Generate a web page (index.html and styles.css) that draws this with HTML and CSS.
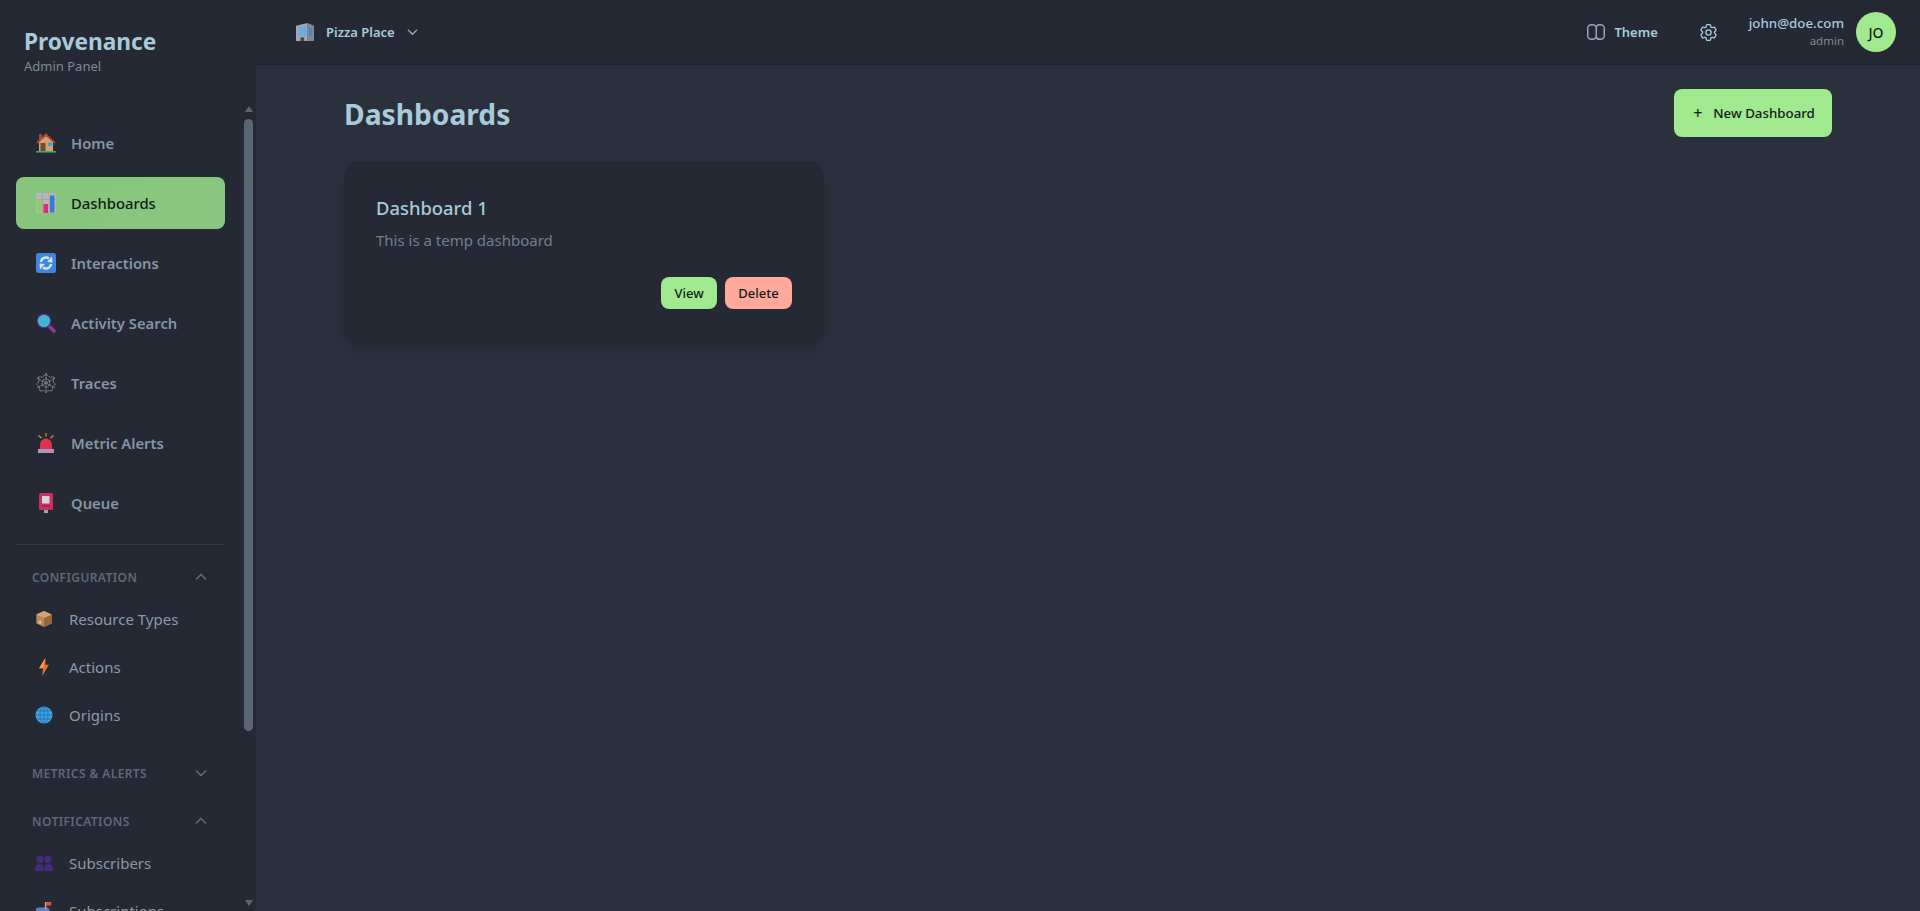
FILE: index.html
```html
<!DOCTYPE html>
<html lang="en">
<head>
<meta charset="utf-8">
<title>Provenance Admin Panel</title>
<link rel="stylesheet" href="styles.css">
</head>
<body>
<div class="app">
  <aside class="sidebar">
    <div class="brand">
      <div class="brand-name">Provenance</div>
      <div class="brand-sub">Admin Panel</div>
    </div>
    <div class="side-body">
      <nav class="nav">
        <a class="nav-item"><svg class="ico" viewBox="0 0 20 20"><rect x="3" y="1" width="3" height="7" fill="#7a5a46"/><path d="M3 9 10 3l7 6v9H3z" fill="#d9a06e"/><path d="M1 10 10 1.500 19 10" fill="none" stroke="#c9472f" stroke-width="1.700"/><rect x="4.500" y="10" width="5" height="8" fill="#6d4a3c"/><rect x="12" y="9.500" width="4" height="3.500" fill="#3fa0e0"/><rect x="0" y="18" width="20" height="1.600" fill="#3fae6a"/></svg><span>Home</span></a>
        <a class="nav-item active"><svg class="ico" viewBox="0 0 20 20"><rect width="20" height="20" rx="2" fill="#b9b5c0"/><path d="M0 6.500h20M0 13h20M6.500 0v20M13 0v20" stroke="#9d9aa6" stroke-width=".7"/><rect x="1.500" y="6" width="4" height="13" fill="#8ccf5e"/><rect x="7.500" y="11" width="4.500" height="9" fill="#d9306f"/><rect x="14" y="2.500" width="4.500" height="17" fill="#2f7fd0"/></svg><span>Dashboards</span></a>
        <a class="nav-item"><svg class="ico" viewBox="0 0 20 20"><rect width="20" height="20" rx="2.500" fill="#3f86dd"/><path d="M5 9a5 5 0 0 1 8-3.500M15 11a5 5 0 0 1-8 3.500" fill="none" stroke="#d5e4f5" stroke-width="2.400"/><path d="m11 9 5.500.5L16 3.500zM9 11l-5.500-.5.500 6z" fill="#d5e4f5"/></svg><span>Interactions</span></a>
        <a class="nav-item"><svg class="ico" viewBox="0 0 20 20"><path d="m12.500 12.500 5.500 5.500" stroke="#8a3f8f" stroke-width="3.600" stroke-linecap="round"/><circle cx="8" cy="8" r="7.600" fill="#4a2f7a"/><circle cx="8" cy="8" r="6.200" fill="#45b4d0"/></svg><span>Activity Search</span></a>
        <a class="nav-item"><svg class="ico" viewBox="0 0 20 20" fill="none" stroke="#a9a5ad" stroke-width=".8" stroke-dasharray="1.400 .5"><path d="M10 0v20M1 5l18 10M19 5 1 15"/><path d="M10 1 13.500 4 18 4 17 9 19.500 11 16.500 14.500 16 18 11.500 17.500 10 19.500 8 17.500 4 18 3.500 14.500.5 11 3 9 2 4 6.500 4z"/><path d="M10 5.500 13.500 7.500 14 12 10 14.500 6 12 6.500 7.500z"/></svg><span>Traces</span></a>
        <a class="nav-item"><svg class="ico" viewBox="0 0 20 20"><path d="M10 0v3.500M2.500 2.500l3 2.500M17.500 2.500l-3 2.500" stroke="#d8a72c" stroke-width="1.100"/><path d="M4 16v-3.500a6 7 0 0 1 12 0V16z" fill="#de3348"/><rect x="2" y="16" width="16" height="4" fill="#b592c0"/></svg><span>Metric Alerts</span></a>
        <a class="nav-item"><svg class="ico" viewBox="0 0 20 20"><rect x="8" y="16" width="4" height="4" fill="#a99bb0"/><rect x="3" y="0" width="14" height="17" rx="1.500" fill="#c92f61"/><rect x="6" y="3" width="7.500" height="7.500" fill="#d8d3dc"/><path d="M6 13h8" stroke="#7e1c40" stroke-width="1"/></svg><span>Queue</span></a>
      </nav>
      <hr class="divider">
      <div class="group">
        <div class="group-title"><span>CONFIGURATION</span><svg class="chev" viewBox="0 0 12 8"><path d="M1 6.500 6 1.500l5 5"/></svg></div>
        <a class="sub-item"><svg class="ico" viewBox="0 0 20 20"><path d="M10 1 18.500 5v10L10 19 1.500 15V5z" fill="#b9875a"/><path d="M10 9 18.500 5v10L10 19z" fill="#96683f"/><path d="M10 1 18.500 5 10 9 1.500 5z" fill="#d0a478"/><rect x="4" y="12" width="3" height="3" fill="#d8c9c0"/></svg><span>Resource Types</span></a>
        <a class="sub-item"><svg class="ico" viewBox="0 0 20 20"><path d="M11.500 0 4.500 11.500h4.500L8 20l7.500-12.500h-4z" fill="#e8703a"/><path d="M11.500 0 4.500 11.500h4.500z" fill="#f0a23c"/></svg><span>Actions</span></a>
        <a class="sub-item"><svg class="ico" viewBox="0 0 20 20"><circle cx="10" cy="10" r="9.500" fill="#3fa5e0"/><g fill="none" stroke="#1f6aa8" stroke-width=".9"><ellipse cx="10" cy="10" rx="4.500" ry="9.500"/><path d="M10 .5v19M.5 10h19M2 5.500h16M2 14.500h16"/></g></svg><span>Origins</span></a>
      </div>
      <div class="group group-collapsed">
        <div class="group-title"><span>METRICS &amp; ALERTS</span><svg class="chev" viewBox="0 0 12 8"><path d="M1 1.500 6 6.500l5-5"/></svg></div>
      </div>
      <div class="group">
        <div class="group-title"><span>NOTIFICATIONS</span><svg class="chev" viewBox="0 0 12 8"><path d="M1 6.500 6 1.500l5 5"/></svg></div>
        <a class="sub-item"><svg class="ico" viewBox="0 0 20 20"><g fill="#47297f"><circle cx="5.500" cy="6" r="4"/><circle cx="14.500" cy="6" r="4"/><path d="M0 19v-3.500a5 5 0 0 1 9.500-1V19zM10.500 19v-4.500a5 5 0 0 1 9.500 1V19z"/></g></svg><span>Subscribers</span></a>
        <a class="sub-item"><svg class="ico" viewBox="0 0 20 20"><rect x="1" y="6" width="15" height="10" rx="3" fill="#5f7fc0"/><rect x="11" y="0" width="1.500" height="8" fill="#b9b5c0"/><rect x="12" y="0" width="6" height="4" fill="#e0503a"/></svg><span>Subscriptions</span></a>
      </div>
      <div class="scrollbar">
        <span class="arrow arrow-up"></span>
        <span class="thumb"></span>
        <span class="arrow arrow-down"></span>
      </div>
    </div>
  </aside>
  <div class="main-col">
    <header class="topbar">
      <div class="org">
        <svg class="ico" viewBox="0 0 20 20"><path d="M0 3 13 0v20H0z" fill="#a9a3b4"/><path d="M13 0l7 3v17h-7z" fill="#8a8496"/><path d="M3 4h8v10.500H3z" fill="#49b5ee"/><path d="M3 7.500h8M3 11h8M5.700 4v10.500M8.300 4v10.500" stroke="#a9a3b4" stroke-width=".7"/><rect x="14.500" y="5" width="3" height="9.500" fill="#2f8fd0"/><rect x="5" y="16" width="4" height="4" fill="#4a4452"/></svg>
        <span class="org-name">Pizza Place</span>
        <svg class="chev chev-org" viewBox="0 0 12 8"><path d="M1 1.500 6 6.500l5-5"/></svg>
      </div>
      <div class="top-right">
        <div class="theme">
          <svg class="theme-ico" viewBox="0 0 18 16"><rect x=".75" y=".75" width="8.500" height="14.500" rx="3.500"/><path d="M9.250 3.500c.3-1.700 1.300-2.750 3-2.750h1.500a3.500 3.500 0 0 1 3.500 3.500v7.500a3.500 3.500 0 0 1-3.500 3.500h-1.500c-1.700 0-2.700-1-3-2.750"/></svg>
          <span>Theme</span>
        </div>
        <svg class="gear" viewBox="0 0 24 24"><path d="M9.594 3.940c.09-.542.56-.94 1.110-.94h2.593c.55 0 1.020.398 1.110.94l.213 1.281c.063.374.313.686.645.870.074.040.147.083.220.127.325.196.720.257 1.075.124l1.217-.456a1.125 1.125 0 0 1 1.370.490l1.296 2.247a1.125 1.125 0 0 1-.260 1.431l-1.003.827c-.293.241-.438.613-.430.992a7.723 7.723 0 0 1 0 .255c-.008.378.137.750.430.991l1.004.827c.424.350.534.955.260 1.430l-1.298 2.247a1.125 1.125 0 0 1-1.369.491l-1.217-.456c-.355-.133-.750-.072-1.076.124a6.470 6.470 0 0 1-.220.128c-.331.183-.581.495-.644.869l-.213 1.281c-.090.543-.560.940-1.110.940h-2.594c-.550 0-1.019-.398-1.110-.940l-.213-1.281c-.062-.374-.312-.686-.644-.870a6.520 6.520 0 0 1-.220-.127c-.325-.196-.720-.257-1.076-.124l-1.217.456a1.125 1.125 0 0 1-1.369-.490l-1.297-2.247a1.125 1.125 0 0 1 .260-1.431l1.004-.827c.292-.240.437-.613.430-.991a6.932 6.932 0 0 1 0-.255c.007-.380-.138-.751-.430-.992l-1.004-.827a1.125 1.125 0 0 1-.260-1.430l1.297-2.247a1.125 1.125 0 0 1 1.370-.491l1.216.456c.356.133.751.072 1.076-.124.072-.044.146-.086.220-.128.332-.183.582-.495.644-.869l.214-1.280Z"/><path d="M15 12a3 3 0 1 1-6 0 3 3 0 0 1 6 0Z"/></svg>
        <div class="user">
          <div class="user-mail">john@doe.com</div>
          <div class="user-role">admin</div>
        </div>
        <div class="avatar">JO</div>
      </div>
    </header>
    <main class="content">
      <div class="page-head">
        <h1>Dashboards</h1>
        <button class="btn-new"><span class="plus">+</span>New Dashboard</button>
      </div>
      <section class="card">
        <h2>Dashboard 1</h2>
        <p>This is a temp dashboard</p>
        <div class="card-actions">
          <button class="btn btn-view">View</button>
          <button class="btn btn-del">Delete</button>
        </div>
      </section>
    </main>
  </div>
</div>
</body>
</html>
```
FILE: styles.css
```css
* { box-sizing: border-box; }
html, body { margin: 0; height: 100%; overflow: hidden; }
body {
  font-family: "Noto Sans", "Open Sans", sans-serif;
  background: #2a303c;
  color: #a8cadb;
}
.app { display: flex; height: 911px; }
.sidebar {
  width: 256px;
  flex: none;
  background: #242933;
  display: flex;
  flex-direction: column;
  overflow: hidden;
}
.brand {
  height: 100px;
  flex: none;
  padding: 27px 24px 0;
  border-bottom: 1px solid #21252e;
}
.brand-name { font-size: 22.7px; font-weight: 700; line-height: 30px; color: #a8cadb; }
.brand-sub { font-size: 13px; line-height: 18px; color: #7d8a97; }
.side-body { position: relative; flex: 1; padding: 17px 31px 0 16px; overflow: hidden; }
.nav { display: flex; flex-direction: column; gap: 8px; }
.nav-item {
  display: flex;
  align-items: center;
  height: 52px;
  padding-left: 20px;
  gap: 15px;
  border-radius: 8px;
  font-size: 14.8px;
  font-weight: 600;
  color: #8496a5;
}
.nav-item.active { background: linear-gradient(100deg, #87c57b, #8ac67f); color: #13191a; font-weight: 500; }
.ico { width: 20px; height: 20px; flex: none; }
.divider { border: 0; height: 1px; background: #353b47; margin: 15px 0 0; }
.group { margin-top: 22px; }
.group + .group { margin-top: 24px; }
.group-collapsed { margin-bottom: 28px; }
.group-collapsed + .group { margin-top: 0; }
.group-title {
  display: flex;
  justify-content: space-between;
  align-items: center;
  height: 20px;
  padding: 0 18px 0 16px;
  font-size: 12px;
  font-weight: 600;
  letter-spacing: .4px;
  color: #5d6a78;
}
.chev { width: 12px; height: 8px; fill: none; stroke: #66727e; stroke-width: 1.300; }
.sub-item {
  display: flex;
  align-items: center;
  height: 48px;
  padding-left: 19px;
  gap: 16px;
  font-size: 15px;
  color: #8b9aa8;
}
.group-title + .sub-item { margin-top: 8px; }
.sub-item .ico { width: 18px; height: 18px; }
.scrollbar {
  position: absolute;
  top: 0;
  right: 3px;
  bottom: 0;
  width: 9px;
  display: flex;
  flex-direction: column;
  align-items: center;
}
.arrow { width: 0; height: 0; border-left: 4.500px solid transparent; border-right: 4.500px solid transparent; flex: none; }
.arrow-up { border-bottom: 6px solid #5a6671; margin-top: 6px; }
.thumb { width: 9px; height: 612px; margin-top: 7px; border-radius: 5px; background: #5a6671; }
.arrow-down { border-top: 6px solid #5a6671; margin-top: 169px; }
.main-col { flex: 1; min-width: 0; display: flex; flex-direction: column; }
.topbar {
  height: 65px;
  flex: none;
  background: #242933;
  border-bottom: 1px solid #20242c;
  display: flex;
  justify-content: space-between;
  align-items: center;
  padding: 0 24px 0 40px;
}
.org { display: flex; align-items: center; gap: 12px; font-size: 13px; font-weight: 600; }
.org .ico { width: 18px; height: 18px; }
.chev-org { width: 11px; height: 8px; stroke: #9aa8b3; margin-left: 0; }
.top-right { display: flex; align-items: center; }
.theme { display: flex; align-items: center; gap: 9px; font-size: 13px; font-weight: 600; }
.theme-ico { width: 18px; height: 16px; fill: none; stroke: #94a7b5; stroke-width: 1.500; }
.gear { width: 21px; height: 21px; margin-left: 40px; fill: none; stroke: #a8cadb; stroke-width: 1.500; }
.user { margin-left: 30px; text-align: right; }
.user-mail { font-size: 13.3px; line-height: 18px; font-weight: 500; }
.user-role { font-size: 11.5px; line-height: 18px; color: #7d8a97; }
.avatar {
  width: 40px;
  height: 40px;
  border-radius: 50%;
  margin-left: 12px;
  background: #a0e98f;
  color: #13191a;
  font-size: 14px;
  font-weight: 500;
  display: flex;
  align-items: center;
  justify-content: center;
}
.content { padding: 24px 88px 0; }
.page-head { display: flex; justify-content: space-between; align-items: center; height: 48px; }
h1 { margin: 0; padding-top: 2px; font-size: 28.2px; font-weight: 700; color: #a8cadb; }
.btn-new {
  width: 158px;
  height: 48px;
  padding: 0 0 0 2px;
  border: 0;
  border-radius: 8px;
  background: #a0e98f;
  color: #13191a;
  font: 500 13.3px "Noto Sans", sans-serif;
  display: flex;
  align-items: center;
  justify-content: center;
  gap: 11px;
}
.plus { font-size: 16px; line-height: 1; }
.card {
  width: 480px;
  height: 182px;
  margin-top: 24px;
  padding: 35px 32px 0;
  background: #242933;
  border-radius: 16px;
  box-shadow: 0 10px 15px -3px rgba(0, 0, 0, .1), 0 4px 6px -4px rgba(0, 0, 0, .1);
  display: flex;
  flex-direction: column;
}
h2 { margin: 0; font-size: 18.4px; line-height: 24px; font-weight: 500; color: #a8cadb; }
.card p { margin: 9px 0 0; font-size: 15px; line-height: 22px; color: #6f8090; }
.card-actions { display: flex; justify-content: flex-end; gap: 8px; margin-top: 26px; }
.btn {
  height: 32px;
  padding: 0 13.300px;
  border: 0;
  border-radius: 8px;
  color: #13191a;
  font: 500 13px "Noto Sans", sans-serif;
}
.btn-view { background: #a0e98f; }
.btn-del { background: #ffa99a; }
```
